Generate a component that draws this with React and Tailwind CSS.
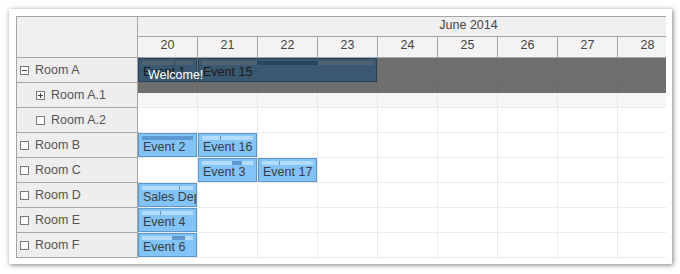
import React from 'react';

// Scheduler view: rooms on the left, days of June 2014 across the top
const days = [20, 21, 22, 23, 24, 25, 26, 27, 28];

const rows = [
  {
    name: 'Room A', level: 0, icon: 'minus', shaded: true,
    events: [
      { text: 'Event 1', start: 0, span: 1, mark: [32, 1] },
      { text: 'Event 15', start: 1, span: 3, mark: [55, 61] },
    ],
  },
  { name: 'Room A.1', level: 1, icon: 'plus', shaded: true, events: [] },
  { name: 'Room A.2', level: 1, icon: 'box', events: [] },
  {
    name: 'Room B', level: 0, icon: 'box',
    events: [
      { text: 'Event 2', start: 0, span: 1, mark: [0, 51] },
      { text: 'Event 16', start: 1, span: 1, mark: [18, 1] },
    ],
  },
  {
    name: 'Room C', level: 0, icon: 'box',
    events: [
      { text: 'Event 3', start: 1, span: 1, mark: [30, 10] },
      { text: 'Event 17', start: 2, span: 1, mark: [17, 1] },
    ],
  },
  { name: 'Room D', level: 0, icon: 'box', events: [{ text: 'Sales Dept', start: 0, span: 1, mark: [37, 1] }] },
  { name: 'Room E', level: 0, icon: 'box', events: [{ text: 'Event 4', start: 0, span: 1, mark: [18, 1] }] },
  { name: 'Room F', level: 0, icon: 'box', events: [{ text: 'Event 6', start: 0, span: 1, mark: [30, 13] }] },
];

const TreeIcon = ({ type }) => (
  <div className="relative w-[9px] h-[9px] border border-[#7a7a7a] bg-white shrink-0">
    {type !== 'box' && <div className="absolute left-[1px] top-[3px] w-[5px] h-[1px] bg-[#444]" />}
    {type === 'plus' && <div className="absolute left-[3px] top-[1px] w-[1px] h-[5px] bg-[#444]" />}
  </div>
);

const Event = ({ ev }) => (
  <div
    className="absolute top-0 h-[24px] border border-[#5b96cc] bg-[#82c3f8] overflow-hidden"
    style={{ left: ev.start * 60, width: ev.span * 60 - 1 }}
  >
    <div className="mx-[3px] mt-[2px] h-[4px] bg-[#b3dcfc] flex">
      <div className="bg-[#5c9ad1]" style={{ marginLeft: ev.mark[0], width: ev.mark[1] }} />
    </div>
    <div className="pl-[4px] leading-[14px] whitespace-nowrap text-[#3c3c3c]">{ev.text}</div>
  </div>
);

export default function App() {
  return (
    <div className="w-[680px] h-[274px] bg-white pl-[9px] pt-[9px] font-['Liberation_Sans',Arial,sans-serif] text-[12.5px]">
      <div className="w-[663px] h-[255px] bg-white pl-[7px] pt-[7px] shadow-[1px_1px_5px_rgba(0,0,0,0.5)]">
        <div className="w-[650px] border-l border-t border-[#a5a5a5] overflow-hidden">
          {/* Header */}
          <div className="flex h-[41px]">
            <div className="w-[121px] shrink-0 bg-[#f0f0f0] border-r border-b border-[#a5a5a5]" />
            <div className="flex-1 flex flex-col overflow-hidden">
              <div className="h-[20px] shrink-0 flex bg-[#f0f0f0] border-b border-[#a5a5a5]">
                <div className="w-[661px] shrink-0 text-center leading-[16px] text-[#444]">June 2014</div>
              </div>
              <div className="h-[21px] shrink-0 flex bg-[#f3f3f3] border-b border-[#a5a5a5]">
                {days.map((d) => (
                  <div
                    key={d}
                    className="w-[60px] shrink-0 border-r border-[#a5a5a5] text-center leading-[17px] text-[#444]"
                  >
                    {d}
                  </div>
                ))}
              </div>
            </div>
          </div>

          {/* Rows */}
          <div className="relative">
            {rows.map((row) => (
              <div key={row.name} className="flex h-[25px]">
                <div
                  className={`w-[121px] shrink-0 flex items-center gap-[6px] bg-[#eeeeee] border-r border-b border-[#a5a5a5] text-[#555] ${
                    row.level ? 'pl-[19px]' : 'pl-[3px]'
                  }`}
                >
                  <TreeIcon type={row.icon} />
                  <span className="whitespace-nowrap">{row.name}</span>
                </div>
                <div className={`relative flex-1 flex overflow-hidden ${row.shaded ? 'bg-[#f6f6f6]' : 'bg-white'}`}>
                  {days.map((d) => (
                    <div key={d} className="w-[60px] shrink-0 border-r border-b border-[#ebebeb]" />
                  ))}
                  {row.events.map((ev) => (
                    <Event key={ev.text} ev={ev} />
                  ))}
                </div>
              </div>
            ))}

            {/* Message bar */}
            <div className="absolute z-10 top-0 left-[121px] right-0 h-[35px] bg-black/55 pl-[10px] pt-[10px] leading-[14px] text-white">
              Welcome!
            </div>
          </div>
        </div>
      </div>
    </div>
  );
}
